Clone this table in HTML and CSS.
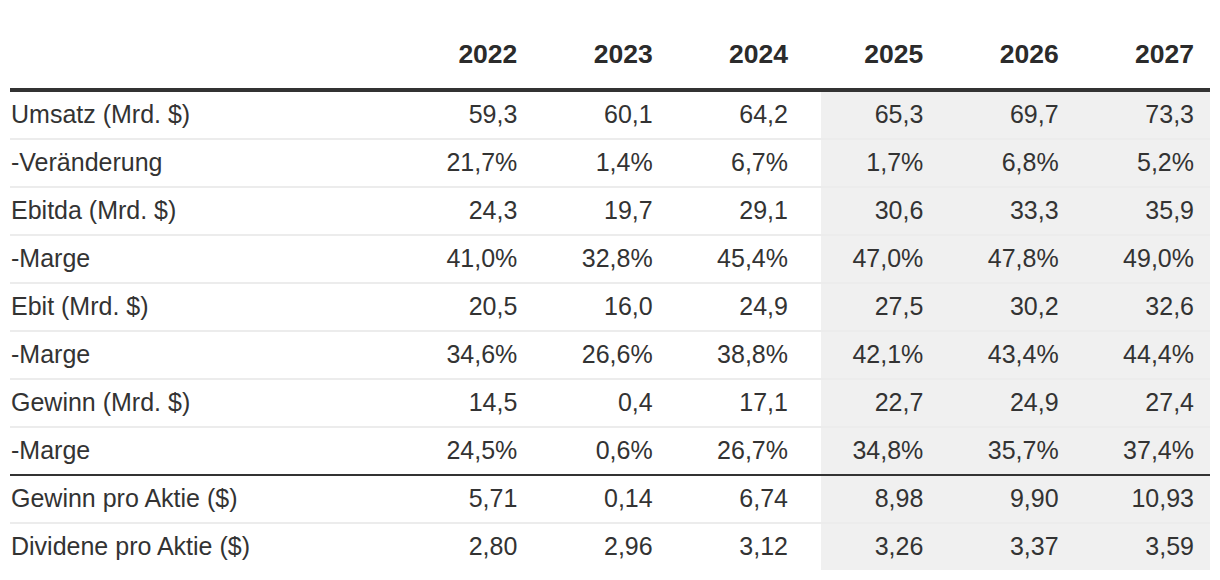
FILE: index.html
```html
<!DOCTYPE html>
<html lang="de">
<head>
<meta charset="utf-8">
<title>Finanzkennzahlen</title>
<link rel="stylesheet" href="styles.css">
</head>
<body>
<table class="fin">
  <colgroup>
    <col class="c-label">
    <col class="c-num"><col class="c-num"><col class="c-num">
    <col class="c-num"><col class="c-num"><col class="c-num">
  </colgroup>
  <thead>
    <tr>
      <th class="lbl"></th>
      <th>2022</th><th>2023</th><th>2024</th>
      <th class="est first">2025</th><th class="est">2026</th><th class="est">2027</th>
    </tr>
  </thead>
  <tbody>
    <tr><td class="lbl">Umsatz (Mrd. $)</td><td>59,3</td><td>60,1</td><td>64,2</td><td class="est first">65,3</td><td class="est">69,7</td><td class="est">73,3</td></tr>
    <tr><td class="lbl">-Veränderung</td><td>21,7%</td><td>1,4%</td><td>6,7%</td><td class="est first">1,7%</td><td class="est">6,8%</td><td class="est">5,2%</td></tr>
    <tr><td class="lbl">Ebitda (Mrd. $)</td><td>24,3</td><td>19,7</td><td>29,1</td><td class="est first">30,6</td><td class="est">33,3</td><td class="est">35,9</td></tr>
    <tr><td class="lbl">-Marge</td><td>41,0%</td><td>32,8%</td><td>45,4%</td><td class="est first">47,0%</td><td class="est">47,8%</td><td class="est">49,0%</td></tr>
    <tr><td class="lbl">Ebit (Mrd. $)</td><td>20,5</td><td>16,0</td><td>24,9</td><td class="est first">27,5</td><td class="est">30,2</td><td class="est">32,6</td></tr>
    <tr><td class="lbl">-Marge</td><td>34,6%</td><td>26,6%</td><td>38,8%</td><td class="est first">42,1%</td><td class="est">43,4%</td><td class="est">44,4%</td></tr>
    <tr><td class="lbl">Gewinn (Mrd. $)</td><td>14,5</td><td>0,4</td><td>17,1</td><td class="est first">22,7</td><td class="est">24,9</td><td class="est">27,4</td></tr>
    <tr class="sep"><td class="lbl">-Marge</td><td>24,5%</td><td>0,6%</td><td>26,7%</td><td class="est first">34,8%</td><td class="est">35,7%</td><td class="est">37,4%</td></tr>
    <tr><td class="lbl">Gewinn pro Aktie ($)</td><td>5,71</td><td>0,14</td><td>6,74</td><td class="est first">8,98</td><td class="est">9,90</td><td class="est">10,93</td></tr>
    <tr class="last"><td class="lbl">Dividene pro Aktie ($)</td><td>2,80</td><td>2,96</td><td>3,12</td><td class="est first">3,26</td><td class="est">3,37</td><td class="est">3,59</td></tr>
  </tbody>
</table>
</body>
</html>
```
FILE: styles.css
```css
html, body {
  margin: 0;
  padding: 0;
  background: #ffffff;
}

body {
  padding: 20px 0 0 10px;
  font-family: "Liberation Sans", Arial, Helvetica, sans-serif;
  color: #333333;
}

.fin {
  width: 1200px;
  table-layout: fixed;
  border-collapse: collapse;
  font-size: 25px;
  line-height: 28px;
}

.c-label { width: 388px; }
.c-num { width: 135.33px; }

.fin th,
.fin td {
  padding: 8px 16px 10px 0;
  text-align: right;
  white-space: nowrap;
}

.fin th {
  font-size: 26.5px;
  font-weight: bold;
  color: #2b2b2b;
  padding-top: 20px;
  padding-bottom: 20px;
  border-bottom: 4px solid #333333;
}

.fin .lbl {
  text-align: left;
  padding-left: 1px;
}

.fin td {
  border-bottom: 2px solid #ececec;
}

.fin tr.sep td {
  border-bottom: 2px solid #333333;
}

.fin tr.last td {
  border-bottom: none;
}

.fin td.est {
  background: #f0f0f0;
}

.fin td.est.first {
  background: linear-gradient(to right, #ffffff 17px, #f0f0f0 17px);
}
```
